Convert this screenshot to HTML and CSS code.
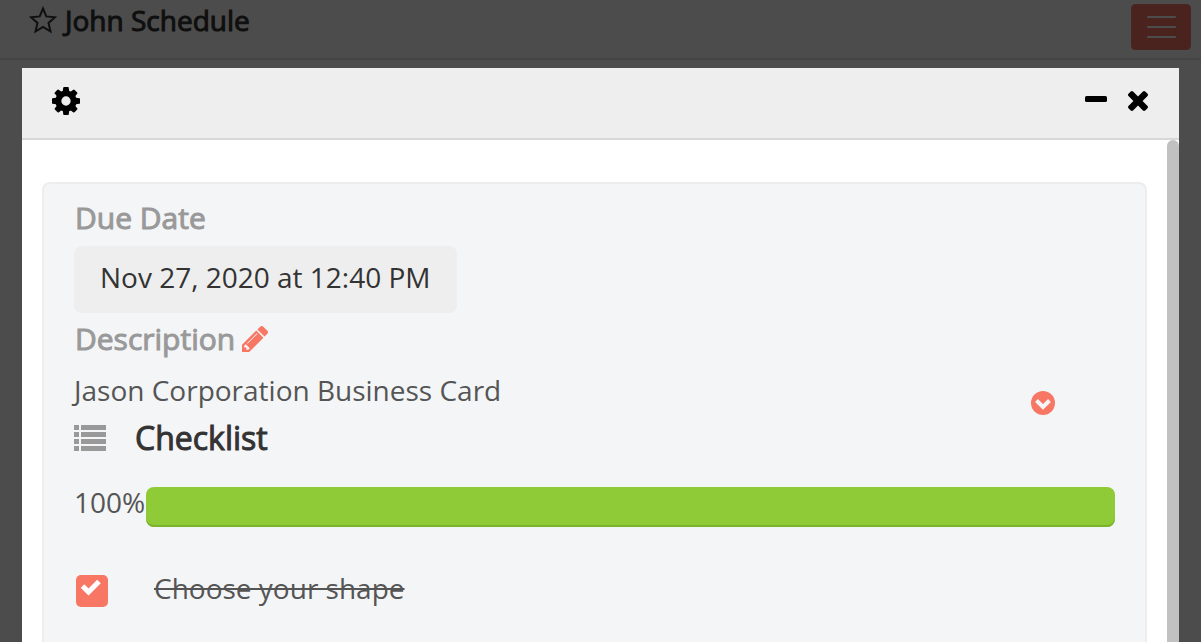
FILE: index.html
```html
<!DOCTYPE html>
<html lang="en">
<head>
<meta charset="utf-8">
<meta name="viewport" content="width=device-width, initial-scale=1">
<title>John Schedule</title>
<link rel="stylesheet" href="styles.css">
</head>
<body>
<header class="navbar">
  <h1 class="board-title">
    <svg class="star" viewBox="0 0 28 28" aria-hidden="true"><path d="M14 2.500l3.300 7.900 8.700.8-6.500 5.700 2 8.600-7.500-4.600-7.500 4.600 2-8.600L2 11.200l8.700-.8z"/></svg>
    <span>John Schedule</span>
  </h1>
  <button class="menu-button" type="button" aria-label="Menu"><span></span><span></span><span></span></button>
</header>

<div class="overlay">
  <section class="modal" role="dialog" aria-label="Card details">
    <div class="modal-header">
      <button class="icon-button" type="button" aria-label="Settings">
        <svg class="cog" viewBox="128 128 1536 1536" aria-hidden="true"><path d="M1152 896q0-106-75-181t-181-75-181 75-75 181 75 181 181 75 181-75 75-181zm512-109v222q0 12-8 23t-20 13l-185 28q-19 54-39 91 35 50 107 138 10 12 10 25t-9 23q-27 37-99 108t-94 71q-12 0-26-9l-138-108q-44 23-91 38-16 136-29 186-7 28-36 28h-222q-14 0-24.500-8.500t-11.500-21.500l-28-184q-49-16-90-37l-141 107q-10 9-25 9-14 0-25-11-126-114-165-168-7-10-7-23 0-12 8-23 15-21 51-66.500t54-70.500q-27-50-41-99l-183-27q-13-2-21-12.500t-8-23.500v-222q0-12 8-23t19-13l186-28q14-46 39-92-40-57-107-138-10-12-10-24 0-10 9-23 26-36 98.500-107.500t94.500-71.500q13 0 26 10l138 107q44-23 91-38 16-136 29-186 7-28 36-28h222q14 0 24.500 8.500t11.500 21.500l28 184q49 16 90 37l142-107q9-9 24-9 13 0 25 10 129 119 165 170 7 8 7 22 0 12-8 23-15 21-51 66.500t-54 70.500q26 50 41 98l183 28q13 2 21 12.500t8 23.500z"/></svg>
      </button>
      <div class="window-actions">
        <button class="icon-button" type="button" aria-label="Minimize">
          <svg class="minus" viewBox="0 0 22 22" aria-hidden="true"><rect x="0" y="6" width="22" height="6" rx="1.500"/></svg>
        </button>
        <button class="icon-button" type="button" aria-label="Close">
          <svg class="times" viewBox="302 366 1188 1188" aria-hidden="true"><path d="M1490 1322q0 40-28 68l-136 136q-28 28-68 28t-68-28l-294-294-294 294q-28 28-68 28t-68-28l-136-136q-28-28-28-68t28-68l294-294-294-294q-28-28-28-68t28-68l136-136q28-28 68-28t68 28l294 294 294-294q28-28 68-28t68 28l136 136q28 28 28 68t-28 68l-294 294 294 294q28 28 28 68z"/></svg>
        </button>
      </div>
    </div>

    <div class="modal-body">
      <div class="modal-content">
        <article class="card">
          <h2 class="label">Due Date</h2>
          <div class="due-date">Nov 27, 2020 at 12:40 PM</div>
          <h2 class="label label-description">Description
            <button class="icon-button" type="button" aria-label="Edit description">
              <svg class="pencil" viewBox="128 149 1515 1515" aria-hidden="true"><path d="M491 1536l91-91-235-235-91 91v107h128v128h107zm523-928q0-22-22-22-10 0-17 7l-542 542q-7 7-7 17 0 22 22 22 10 0 17-7l542-542q7-7 7-17zm-54-192l416 416-832 832h-416v-416zm683 96q0 53-37 90l-166 166-416-416 166-165q36-38 90-38 53 0 91 38l235 234q37 39 37 91z"/></svg>
            </button>
          </h2>
          <div class="summary">
            <div>
              <p class="description">Jason Corporation Business Card</p>
              <h2 class="checklist-title">
                <svg class="list" viewBox="0 0 32 26" aria-hidden="true"><path d="M0 0h5v5H0zM7 0h25v5H7zM0 7h5v5H0zM7 7h25v5H7zM0 14h5v5H0zM7 14h25v5H7zM0 21h5v5H0zM7 21h25v5H7z"/></svg>
                <span>Checklist</span>
              </h2>
            </div>
            <button class="icon-button" type="button" aria-label="Checklist actions">
              <svg class="chevron" viewBox="0 0 24 24" aria-hidden="true"><circle cx="12" cy="12" r="12"/><path d="M5.500 9.500L12 16l6.500-6.500"/></svg>
            </button>
          </div>
          <div class="progress-row">
            <span>100%</span>
            <div class="progress" role="progressbar" aria-label="Checklist progress" aria-valuenow="100" aria-valuemin="0" aria-valuemax="100"><div class="progress-fill" style="width: 100%"></div></div>
          </div>
          <label class="task">
            <span class="tick">
              <input type="checkbox" checked>
              <svg viewBox="0 0 32 32" aria-hidden="true"><path d="M6.500 11l6 6L23 6.500"/></svg>
            </span>
            <span class="task-name">Choose your shape</span>
          </label>
        </article>
      </div>
      <div class="scroll-track"><div class="scroll-thumb"></div></div>
    </div>
  </section>
</div>
</body>
</html>
```
FILE: styles.css
```css
* {
  box-sizing: border-box;
}

body {
  margin: 0;
  overflow: hidden;
  background: #fff;
  color: #555;
  font: 28px/42px "Open Sans", "Noto Sans", sans-serif;
}

h1,
h2,
p {
  margin: 0;
  font-size: 30px;
  font-weight: 400;
}

svg {
  display: block;
}

button {
  padding: 0;
  border: 0;
  background: none;
  color: inherit;
  font: inherit;
}

.navbar {
  display: flex;
  justify-content: space-between;
  align-items: flex-start;
  height: 60px;
  padding: 0 10px 0 29px;
  border-bottom: 2px solid #e7e7e7;
}

.board-title {
  display: flex;
  align-items: center;
  gap: 8px;
  font-size: 28px;
  line-height: 40px;
  color: #333;
  -webkit-text-stroke: 1px;
}

.star {
  width: 28px;
  height: 28px;
  fill: none;
  stroke: #333;
  stroke-width: 2;
}

.menu-button {
  display: flex;
  flex-direction: column;
  justify-content: center;
  align-items: center;
  gap: 8px;
  width: 60px;
  height: 46px;
  margin-top: 4px;
  border: 1px solid #f8806f;
  border-radius: 4px;
  background: #f87764;
}

.menu-button span {
  width: 29px;
  height: 2px;
  border-radius: 1px;
  background: #fff;
}

.overlay {
  position: fixed;
  inset: 0;
  padding: 68px 22px 0;
  background: rgba(0, 0, 0, 0.7);
}

.modal {
  display: flex;
  flex-direction: column;
  height: 100%;
  background: #fff;
}

.modal-header {
  display: flex;
  flex: none;
  justify-content: space-between;
  align-items: center;
  height: 72px;
  padding: 0 31px 4px 30px;
  border-bottom: 2px solid #d8d8d8;
  background: #eee;
  color: #000;
}

.modal-header svg,
.pencil {
  fill: currentColor;
}

.window-actions {
  display: flex;
  align-items: center;
  gap: 21px;
}

.cog {
  width: 28px;
  height: 28px;
}

.minus {
  width: 22px;
  height: 22px;
}

.times {
  width: 20px;
  height: 20px;
}

.modal-body {
  display: flex;
  flex: 1;
  min-height: 0;
}

.modal-content {
  flex: 1;
  overflow: hidden;
  padding: 42px 20px 0;
}

.scroll-track {
  width: 12px;
}

.scroll-thumb {
  height: 1000px;
  max-height: 100%;
  border-radius: 6px 6px 0 0;
  background: #c1c1c1;
}

.card {
  min-height: 520px;
  padding: 13px 30px;
  border: 2px solid #ededed;
  border-radius: 8px;
  background: #f4f5f7;
}

.label {
  padding-left: 1px;
  color: #999;
  -webkit-text-stroke: 1px;
}

.due-date {
  width: fit-content;
  margin: 7px 0 5px;
  padding: 10px 26px 15px;
  border-radius: 8px;
  background: #eee;
  color: #333;
}

.label-description {
  display: flex;
  align-items: center;
  gap: 7px;
}

.pencil {
  width: 26px;
  height: 26px;
  color: #f87764;
}

.summary {
  display: flex;
  justify-content: space-between;
  align-items: flex-start;
  padding: 9px 60px 0 0;
}

.summary .icon-button {
  margin-top: 22px;
}

.description {
  font-size: 28px;
}

.checklist-title {
  display: flex;
  align-items: center;
  gap: 29px;
  margin-top: 6px;
  font-size: 32px;
  color: #333;
  -webkit-text-stroke: 1px;
}

.list {
  width: 32px;
  height: 26px;
  fill: #999;
  stroke: none;
}

.chevron {
  width: 24px;
  height: 24px;
  fill: #f87764;
}

.chevron path {
  fill: none;
  stroke: #f4f5f7;
  stroke-width: 4;
}

.progress-row {
  display: flex;
  gap: 1px;
  margin-top: 22px;
}

.progress {
  flex: 1;
  height: 40px;
  margin-top: 6px;
}

.progress-fill {
  height: 100%;
  border-radius: 8px;
  background: #8fcb36;
  box-shadow: inset 0 -2px #7cb32c;
}

.task {
  display: flex;
  align-items: center;
  gap: 46px;
  margin-top: 40px;
}

.tick {
  display: grid;
  margin: 5px 0 0 2px;
}

.tick input,
.tick svg {
  grid-area: 1 / 1;
  width: 32px;
  height: 32px;
  margin: 0;
}

.tick input {
  appearance: none;
  border-radius: 5px;
  background: #f87764;
}

.tick svg {
  z-index: 1;
  fill: none;
  stroke: #fff;
  stroke-width: 5;
  pointer-events: none;
}

.task-name {
  text-decoration: line-through;
}
```
